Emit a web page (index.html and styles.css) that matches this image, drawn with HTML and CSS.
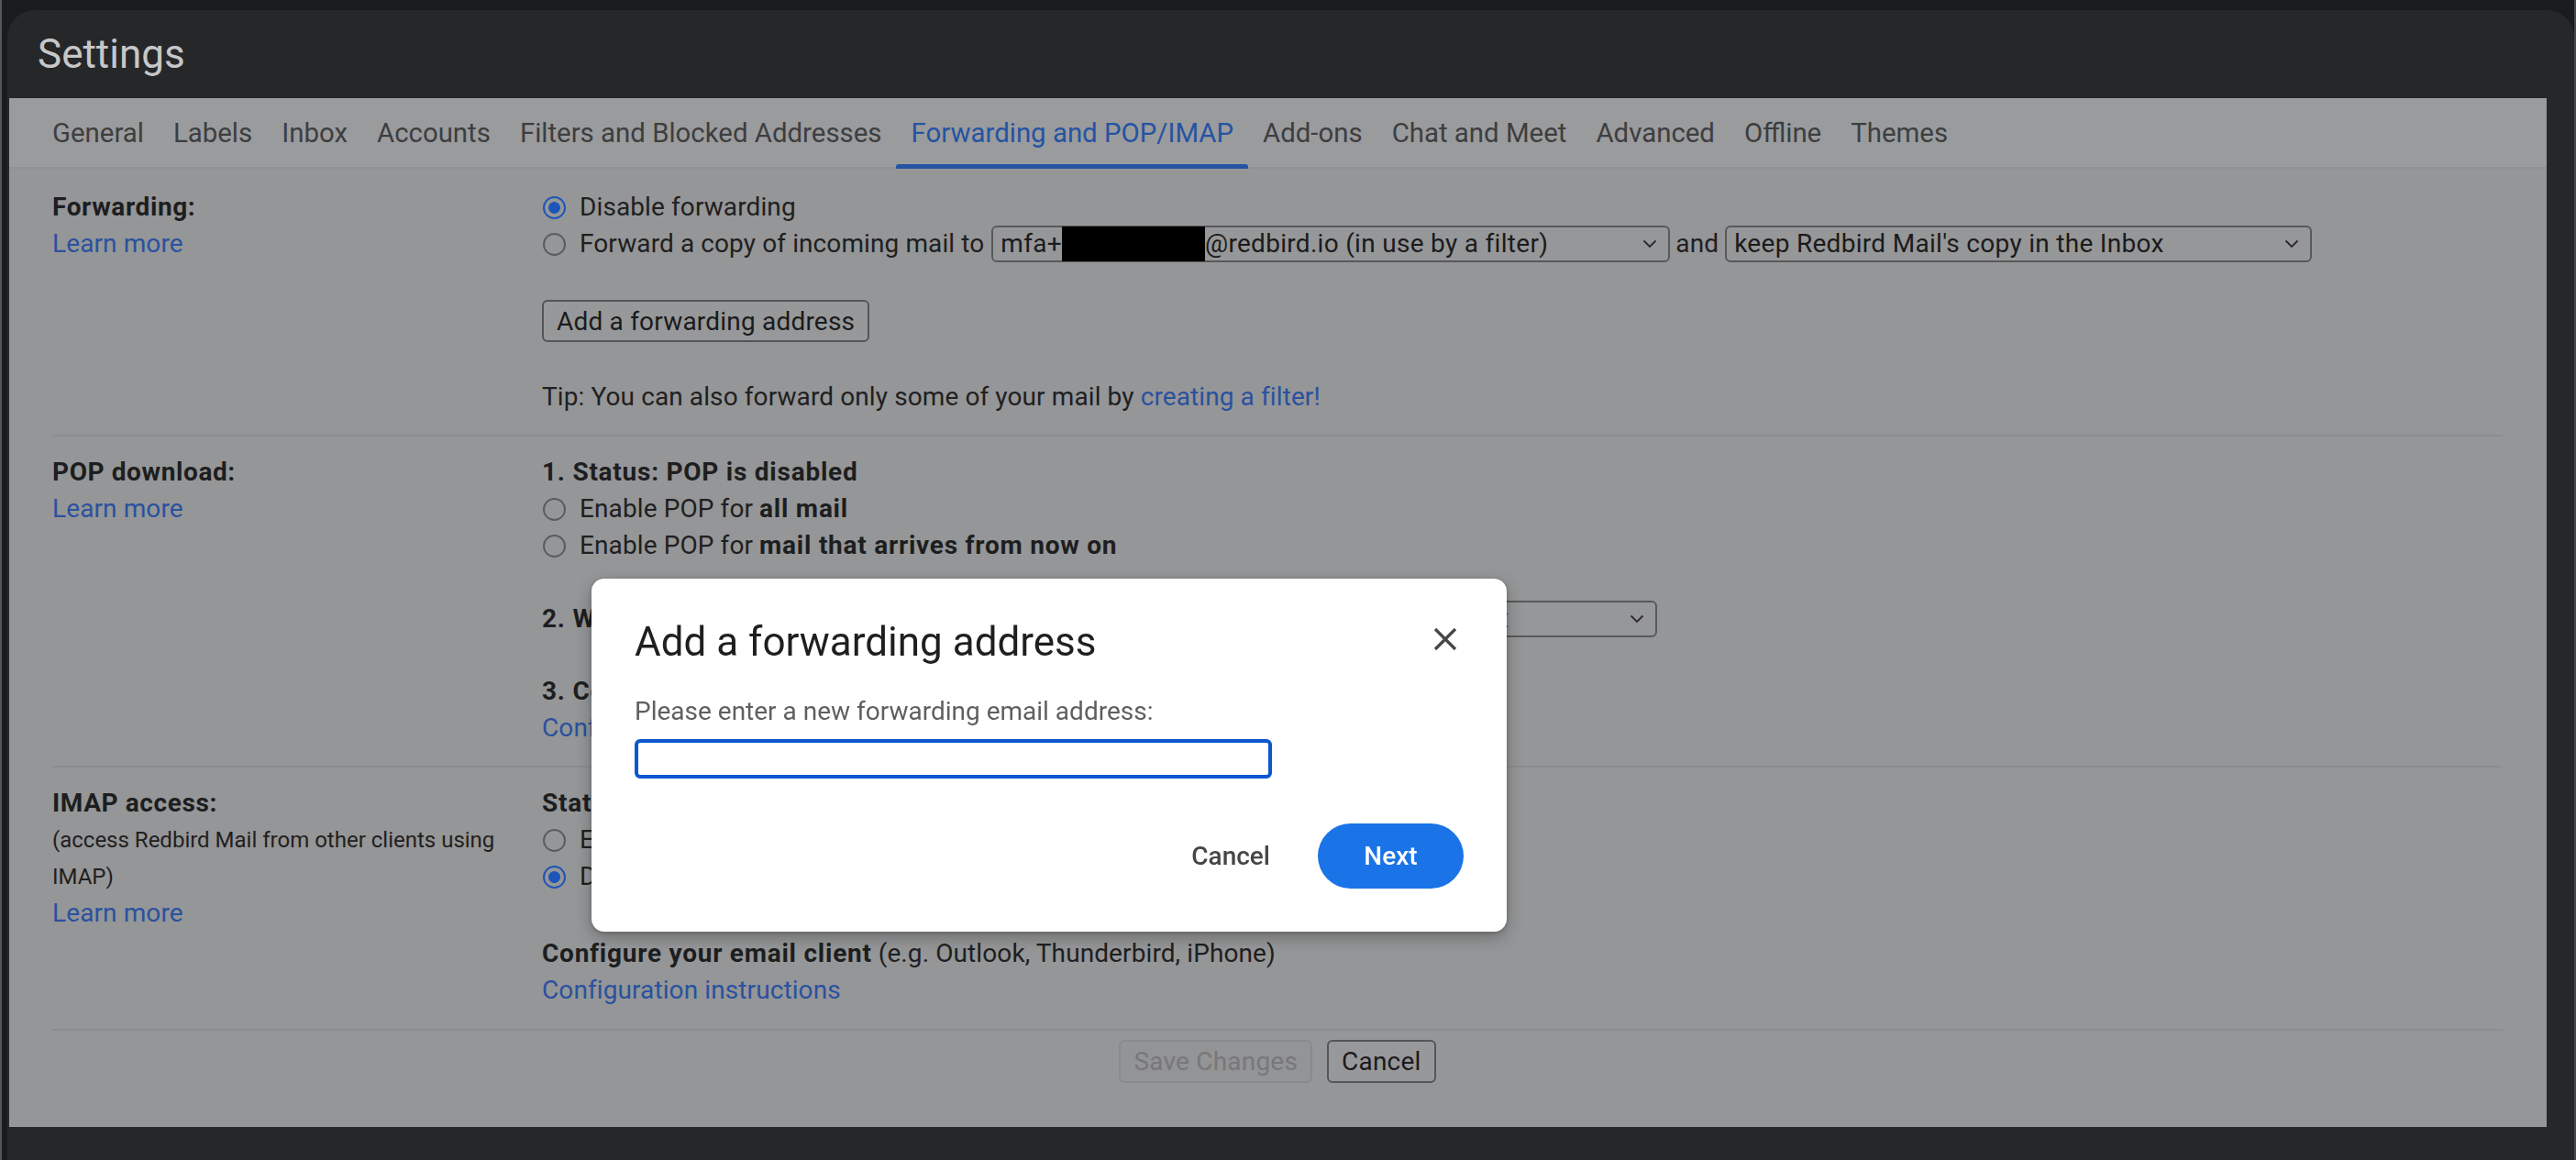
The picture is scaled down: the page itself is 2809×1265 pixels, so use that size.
FILE: index.html
```html
<!DOCTYPE html>
<html lang="en">
<head>
<meta charset="utf-8">
<title>Settings</title>
<link rel="stylesheet" href="styles.css">
</head>
<body>
<div class="window">
  <header class="header">Settings</header>
  <div class="settings">
    <nav class="tabs">
      <span class="tab">General</span>
      <span class="tab">Labels</span>
      <span class="tab">Inbox</span>
      <span class="tab">Accounts</span>
      <span class="tab">Filters and Blocked Addresses</span>
      <span class="tab active">Forwarding and POP/IMAP</span>
      <span class="tab">Add-ons</span>
      <span class="tab">Chat and Meet</span>
      <span class="tab">Advanced</span>
      <span class="tab">Offline</span>
      <span class="tab">Themes</span>
    </nav>
    <main class="content">
      <section class="section sec-fwd">
        <div class="label">
          <div class="label-title">Forwarding:</div>
          <a class="link">Learn more</a>
        </div>
        <div class="value">
          <div class="opt"><span class="radio on"></span>Disable forwarding</div>
          <div class="opt">
            <span class="radio"></span>Forward a copy of incoming mail to
            <span class="select sel-addr"><span class="sel-text">mfa+<span class="redact"></span>@redbird.io (in use by a filter)</span><svg class="chev" width="16" height="10" viewBox="0 0 16 10"><path d="M1.5 1.5l6.5 6.5 6.5-6.5" fill="none" stroke="#2a2a2b" stroke-width="1.8"/></svg></span>
            <span class="and">and</span>
            <span class="select sel-keep"><span class="sel-text">keep Redbird Mail's copy in the Inbox</span><svg class="chev" width="16" height="10" viewBox="0 0 16 10"><path d="M1.5 1.5l6.5 6.5 6.5-6.5" fill="none" stroke="#2a2a2b" stroke-width="1.8"/></svg></span>
          </div>
          <button class="btn btn-add">Add a forwarding address</button>
          <div class="tip">Tip: You can also forward only some of your mail by <a class="link">creating a filter!</a></div>
        </div>
      </section>

      <section class="section sec-pop">
        <div class="label">
          <div class="label-title">POP download:</div>
          <a class="link">Learn more</a>
        </div>
        <div class="value">
          <div class="line"><b>1. Status: POP is disabled</b></div>
          <div class="opt"><span class="radio"></span>Enable POP for&nbsp;<b>all mail</b></div>
          <div class="opt"><span class="radio"></span>Enable POP for&nbsp;<b>mail that arrives from now on</b></div>
          <div class="opt step2"><b>2. When messages are accessed with POP</b>
            <span class="select sel-pop"><span class="sel-text">keep Redbird Mail's copy in the Inbox</span><svg class="chev" width="16" height="10" viewBox="0 0 16 10"><path d="M1.5 1.5l6.5 6.5 6.5-6.5" fill="none" stroke="#2a2a2b" stroke-width="1.8"/></svg></span>
          </div>
          <div class="line step3"><b>3. Configure your email client</b> (e.g. Outlook, Eudora, Netscape Mail)</div>
          <div class="line"><a class="link">Configuration instructions</a></div>
        </div>
      </section>

      <section class="section sec-imap">
        <div class="label">
          <div class="label-title">IMAP access:</div>
          <div class="small">(access Redbird Mail from other clients using IMAP)</div>
          <a class="link">Learn more</a>
        </div>
        <div class="value">
          <div class="line"><b>Status: IMAP is disabled</b></div>
          <div class="opt"><span class="radio"></span>Enable IMAP</div>
          <div class="opt"><span class="radio on"></span>Disable IMAP</div>
          <div class="line configure"><b>Configure your email client</b> (e.g. Outlook, Thunderbird, iPhone)</div>
          <div class="line"><a class="link">Configuration instructions</a></div>
        </div>
      </section>

      <div class="footer">
        <button class="btn disabled">Save Changes</button>
        <button class="btn">Cancel</button>
      </div>
    </main>
  </div>
</div>

<div class="dialog" role="dialog">
  <div class="dlg-head">
    <h2 class="dlg-title">Add a forwarding address</h2>
    <button class="dlg-close" aria-label="Close">
      <svg width="28" height="28" viewBox="0 0 28 28"><path d="M3 3L25 25M25 3L3 25" stroke="#444746" stroke-width="3.2" fill="none"/></svg>
    </button>
  </div>
  <div class="dlg-label">Please enter a new forwarding email address:</div>
  <div class="dlg-input"></div>
  <div class="dlg-actions">
    <button class="dlg-btn dlg-cancel">Cancel</button>
    <button class="dlg-btn dlg-next">Next</button>
  </div>
</div>
</body>
</html>
```

FILE: styles.css
```css
* { box-sizing: border-box; }

body {
  margin: 0;
  width: 2809px;
  height: 1265px;
  overflow: hidden;
  background: #1a1b1d;
  border-left: 2px solid #55565a;
  border-right: 2px solid #46474a;
  font-family: Roboto, "Liberation Sans", sans-serif;
}

.window {
  margin: 11px 0 0 6px;
  height: 1254px;
  background: #262729;
  border-radius: 30px 30px 0 0;
  display: flex;
  flex-direction: column;
}

.header {
  height: 96px;
  padding-left: 33px;
  font-size: 44px;
  line-height: 96px;
  color: #c6c7c9;
}

.settings {
  margin: 0 30px 0 2px;
  height: 1122px;
  background: #959697;
  display: flex;
  flex-direction: column;
}

.tabs {
  height: 77px;
  background: #9a9b9d;
  border-bottom: 2px solid #909193;
  display: flex;
  padding-left: 31px;
}

.tab {
  position: relative;
  padding: 2px 16px 0;
  font-size: 29.4px;
  line-height: 73px;
  color: #3d3e40;
  white-space: nowrap;
}

.tab.active { color: #2553a3; }
.tab.active::after {
  content: "";
  position: absolute;
  left: 0;
  right: 0;
  bottom: -2px;
  height: 5px;
  background: #2553a3;
  border-radius: 3px 3px 0 0;
}

.content {
  padding: 0 48px 0 47px;
}

.section {
  display: grid;
  grid-template-columns: 534px 1fr;
  border-bottom: 2px solid #8c8d8f;
  font-size: 28px;
  line-height: 40px;
  letter-spacing: 0.1px;
  color: #1f2021;
}

.sec-fwd { padding: 22px 0 21px; }
.sec-pop { padding: 19px 0 21px; }
.sec-imap { padding: 19px 0 22px; }

.label { display: flex; flex-direction: column; align-items: flex-start; }
.label-title { font-weight: 700; color: #1d1e1f; letter-spacing: 0.6px; }
.small { font-size: 24px; max-width: 500px; color: #1f2021; letter-spacing: 0; }

.link { color: #2a51a0; text-decoration: none; }

.value { display: flex; flex-direction: column; align-items: flex-start; }

.line { height: 40px; white-space: nowrap; }
.line b, .opt b { font-weight: 700; color: #1d1e1f; letter-spacing: 0.75px; }

.opt {
  display: flex;
  align-items: center;
  height: 40px;
  white-space: nowrap;
}

.radio {
  width: 25px;
  height: 25px;
  border-radius: 50%;
  border: 2px solid #5b5c5e;
  margin: 0 15px 0 1px;
  flex: none;
}

.radio.on {
  border-color: #1d55b8;
  background: radial-gradient(circle, #1d55b8 0 6px, transparent 6.8px);
}

.select {
  display: inline-flex;
  align-items: center;
  justify-content: space-between;
  height: 40px;
  border: 2px solid #58595b;
  border-radius: 6px;
  padding: 0 12px 0 8px;
  background: #969798;
  color: #1b1b1c;
  white-space: nowrap;
  letter-spacing: 0.3px;
}

.sel-text { display: flex; align-items: center; }
.chev { flex: none; }

.sel-addr { width: 740px; margin-left: 8px; }
.sel-keep { width: 640px; }
.sel-pop { width: 640px; margin-left: 14px; }
.and { margin: 0 7px 0 6px; }

.redact {
  display: inline-block;
  width: 156px;
  height: 38px;
  background: #000;
}

.btn {
  font-family: Roboto, "Liberation Sans", sans-serif;
  height: 46px;
  border: 2px solid #545557;
  border-radius: 6px;
  background: #979899;
  color: #1b1b1c;
  font-size: 28px;
  letter-spacing: 0.2px;
  padding: 0 14px;
}

.btn-add { margin-top: 41px; }
.tip { margin-top: 40px; height: 40px; white-space: nowrap; }

.step2 { margin-top: 40px; }
.step3 { margin-top: 39px; }
.configure { margin-top: 44px; }

.footer {
  display: flex;
  justify-content: center;
  gap: 16px;
  padding-top: 10px;
}

.footer .btn { height: 47px; }
.btn.disabled {
  border-color: #898a8c;
  color: #77787a;
  background: #939496;
}

/* dialog */
.dialog {
  position: fixed;
  left: 645px;
  top: 631px;
  width: 998px;
  height: 385px;
  background: #fff;
  border-radius: 14px;
  padding: 41px 47px 47px 47px;
  box-shadow: 0 6px 18px rgba(0, 0, 0, 0.28), 0 1px 4px rgba(0, 0, 0, 0.2);
  display: flex;
  flex-direction: column;
}

.dlg-head {
  display: flex;
  justify-content: space-between;
  align-items: center;
  height: 56px;
}

.dlg-title {
  margin: 0;
  font-size: 44px;
  line-height: 56px;
  font-weight: 400;
  color: #1f1f1f;
}

.dlg-close {
  width: 40px;
  height: 40px;
  border: 0;
  padding: 0;
  background: none;
  display: flex;
  align-items: center;
  justify-content: center;
  margin-top: -6px;
}

.dlg-label {
  margin-top: 28px;
  font-size: 28px;
  line-height: 40px;
  color: #5e5f61;
}

.dlg-input {
  margin-top: 10px;
  width: 695px;
  height: 43px;
  border: 4px solid #0b57d0;
  border-radius: 6px;
}

.dlg-actions {
  margin-top: 49px;
  display: flex;
  justify-content: flex-end;
  gap: 28px;
}

.dlg-btn {
  font-family: Roboto, "Liberation Sans", sans-serif;
  height: 71px;
  border: 0;
  border-radius: 36px;
  font-size: 28px;
  font-weight: 500;
  padding: 0 24px;
  background: none;
}

.dlg-cancel { color: #444746; }
.dlg-next {
  width: 159px;
  background: #1b73e8;
  color: #fff;
}
```
